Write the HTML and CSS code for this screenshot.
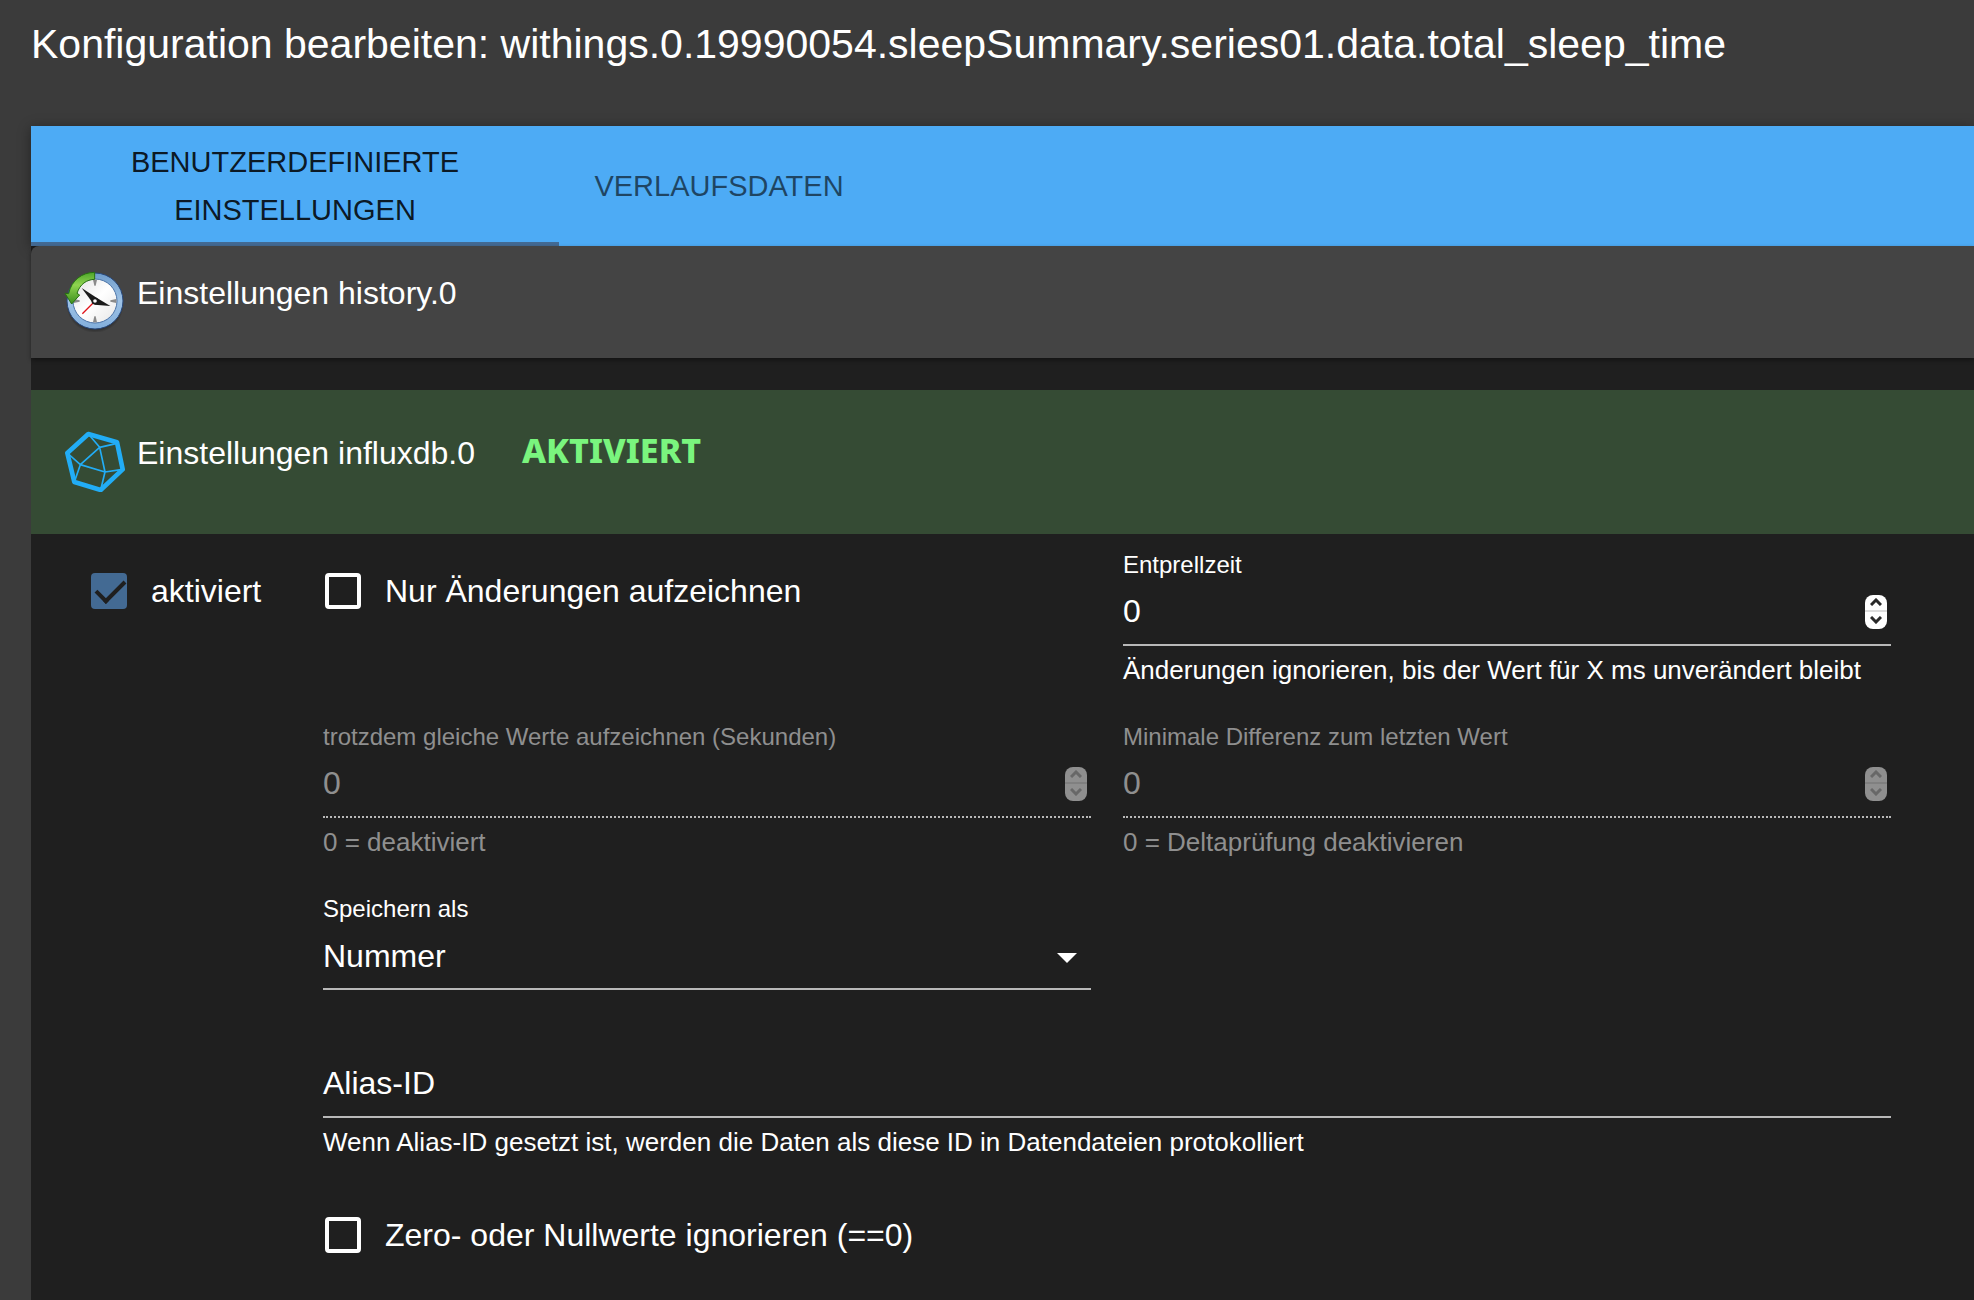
FILE: index.html
```html
<!DOCTYPE html>
<html lang="de">
<head>
  <meta charset="utf-8">
  <meta name="viewport" content="width=device-width, initial-scale=1">
  <title>Konfiguration bearbeiten</title>
  <link rel="stylesheet" href="styles.css">
</head>
<body>
  <header class="title-bar">
    <h1 class="title">Konfiguration bearbeiten: withings.0.19990054.sleepSummary.series01.data.total_sleep_time</h1>
  </header>

  <main class="content">
    <div class="tabs" role="tablist">
      <button class="tab tab-active" type="button" role="tab" aria-selected="true">Benutzerdefinierte Einstellungen</button>
      <button class="tab" type="button" role="tab" aria-selected="false">Verlaufsdaten</button>
    </div>

    <section class="panel">
      <div class="panel-head">
        <svg class="panel-icon" viewBox="36 24 192 192" aria-hidden="true">
          <defs>
            <linearGradient id="ring" x1="0" y1="0" x2="0" y2="1">
              <stop offset="0" stop-color="#6f9ccb"/>
              <stop offset="0.5" stop-color="#9fc3e6"/>
              <stop offset="1" stop-color="#82aedb"/>
            </linearGradient>
            <linearGradient id="face" x1="0" y1="0" x2="1" y2="1">
              <stop offset="0" stop-color="#e2e2e2"/>
              <stop offset="0.5" stop-color="#ffffff"/>
              <stop offset="1" stop-color="#e6e6e6"/>
            </linearGradient>
            <linearGradient id="arrow" x1="0" y1="0" x2="0" y2="1">
              <stop offset="0" stop-color="#4fa52c"/>
              <stop offset="0.4" stop-color="#8fd44f"/>
              <stop offset="1" stop-color="#3c8f1d"/>
            </linearGradient>
            <radialGradient id="shade">
              <stop offset="0.75" stop-color="#000" stop-opacity="0.6"/>
              <stop offset="1" stop-color="#000" stop-opacity="0"/>
            </radialGradient>
          </defs>
          <ellipse cx="135" cy="135" rx="86" ry="84" fill="url(#shade)"/>
          <circle cx="135" cy="123" r="84" fill="url(#ring)" stroke="#27487c" stroke-width="3"/>
          <circle cx="135" cy="123" r="66" fill="url(#face)" stroke="#4c74a8" stroke-width="3"/>
          <g fill="#8a8a8a">
            <path d="M129 59h12l-4 18h-4z"/>
            <path d="M129 187h12l-4-18h-4z"/>
            <path d="M199 117v12l-18-4v-4z"/>
            <path d="M71 117v12l18-4v-4z"/>
          </g>
          <path d="M97 161l36-36" stroke="#e0151c" stroke-width="4"/>
          <path d="M95 84l46 30-12 16z" fill="#1b1b1b"/>
          <path d="M181 138l-48-4 8-20z" fill="#1b1b1b"/>
          <circle cx="135" cy="123" r="8" fill="#fff" stroke="#1b1b1b" stroke-width="5"/>
          <path d="M134 37v21c-24 1-44 14-53 42l8 5-24 27-20-32 11 1c8-40 40-64 78-64z" fill="url(#arrow)" stroke="#267010" stroke-width="3" stroke-linejoin="round"/>
        </svg>
        <h2 class="panel-title">Einstellungen history.0</h2>
      </div>
    </section>

    <section class="panel panel-open">
      <div class="panel-head panel-head-enabled">
        <svg class="panel-icon" viewBox="36 24 192 192" fill="none" stroke="#22adf6" stroke-linejoin="round" aria-hidden="true">
          <path d="M115 42L201 67L218 148L152 210L73 186L52 99Z" stroke-width="14"/>
          <path d="M115 42L149 82L201 70M149 82L165 156L218 148M165 156L152 210M165 156L91 134L73 186M91 134L52 99M91 134L149 82" stroke-width="5"/>
        </svg>
        <h2 class="panel-title">Einstellungen influxdb.0</h2>
        <span class="status">AKTIVIERT</span>
      </div>

      <form class="settings">
        <label class="check">
          <input class="check-box" type="checkbox" checked>
          <span>aktiviert</span>
        </label>
        <label class="check">
          <input class="check-box" type="checkbox">
          <span>Nur Änderungen aufzeichnen</span>
        </label>

        <div class="field">
          <label class="field-label" for="debounce">Entprellzeit</label>
          <div class="field-line">
            <input class="field-input" id="debounce" type="number" value="0">
            <span class="stepper">
              <button class="step" type="button" aria-label="Erhöhen"><svg class="step-icon" viewBox="0 0 12 8"><path d="M1 7l5-5 5 5"/></svg></button>
              <button class="step" type="button" aria-label="Verringern"><svg class="step-icon" viewBox="0 0 12 8"><path d="M1 1l5 5 5-5"/></svg></button>
            </span>
          </div>
          <p class="field-help">Änderungen ignorieren, bis der Wert für X ms unverändert bleibt</p>
        </div>

        <div class="field field-disabled second-column">
          <label class="field-label" for="relog">trotzdem gleiche Werte aufzeichnen (Sekunden)</label>
          <div class="field-line">
            <input class="field-input" id="relog" type="number" value="0" disabled>
            <span class="stepper">
              <button class="step" type="button" aria-label="Erhöhen" disabled><svg class="step-icon" viewBox="0 0 12 8"><path d="M1 7l5-5 5 5"/></svg></button>
              <button class="step" type="button" aria-label="Verringern" disabled><svg class="step-icon" viewBox="0 0 12 8"><path d="M1 1l5 5 5-5"/></svg></button>
            </span>
          </div>
          <p class="field-help">0 = deaktiviert</p>
        </div>

        <div class="field field-disabled">
          <label class="field-label" for="delta">Minimale Differenz zum letzten Wert</label>
          <div class="field-line">
            <input class="field-input" id="delta" type="number" value="0" disabled>
            <span class="stepper">
              <button class="step" type="button" aria-label="Erhöhen" disabled><svg class="step-icon" viewBox="0 0 12 8"><path d="M1 7l5-5 5 5"/></svg></button>
              <button class="step" type="button" aria-label="Verringern" disabled><svg class="step-icon" viewBox="0 0 12 8"><path d="M1 1l5 5 5-5"/></svg></button>
            </span>
          </div>
          <p class="field-help">0 = Deltaprüfung deaktivieren</p>
        </div>

        <div class="field second-column">
          <label class="field-label" for="storage">Speichern als</label>
          <div class="field-line">
            <select class="field-input" id="storage">
              <option>Nummer</option>
            </select>
            <svg class="select-arrow" viewBox="0 0 20 14" aria-hidden="true"><path d="M0 4h20L10 14z"/></svg>
          </div>
        </div>

        <div class="field field-wide">
          <div class="field-line">
            <label class="inline-label" for="alias">Alias-ID</label>
            <input class="field-input" id="alias" type="text">
          </div>
          <p class="field-help">Wenn Alias-ID gesetzt ist, werden die Daten als diese ID in Datendateien protokolliert</p>
        </div>

        <label class="check second-column">
          <input class="check-box" type="checkbox">
          <span>Zero- oder Nullwerte ignorieren (==0)</span>
        </label>
      </form>
    </section>
  </main>
</body>
</html>
```

FILE: styles.css
```css
* {
  box-sizing: border-box;
}

body {
  display: flex;
  flex-direction: column;
  min-height: 100vh;
  margin: 0;
  background: #3b3b3b;
  color: #fff;
  font-family: "Liberation Sans", Arial, sans-serif;
  font-size: 32px;
}

button,
input,
select {
  font: inherit;
  color: inherit;
}

.title-bar {
  padding: 12px 31px 50px;
}

.title {
  margin: 0;
  font-size: 41px;
  font-weight: 400;
  line-height: 64px;
}

.content {
  display: flex;
  flex: 1;
  flex-direction: column;
  margin-left: 31px;
  background: #1f1f1f;
}

/* Tabs */

.tabs {
  display: flex;
  background: #4dabf5;
  box-shadow: 0 2px 12px rgba(0, 0, 0, 0.4);
}

.tab {
  min-width: 320px;
  max-width: 528px;
  min-height: 120px;
  padding: 12px 24px;
  border: 0;
  background: none;
  color: rgba(0, 0, 0, 0.6);
  font-size: 29px;
  line-height: 48px;
  text-transform: uppercase;
}

.tab-active {
  color: rgba(0, 0, 0, 0.87);
  box-shadow: inset 0 -4px #436a93;
}

/* Adapter panels */

.panel-head {
  display: flex;
  align-items: flex-start;
  gap: 11px;
  padding: 22px 31px 26px;
  border-top-left-radius: 8px;
  background: #444;
  box-shadow: 0 2px 4px rgba(0, 0, 0, 0.4);
}

.panel-open {
  margin-top: 32px;
}

.panel-head-enabled {
  padding: 38px 31px 42px;
  border-radius: 0;
  background: #354b34;
  box-shadow: none;
}

.panel-icon {
  width: 64px;
  height: 64px;
}

.panel-title {
  margin: 0;
  font-size: 32px;
  font-weight: 400;
  line-height: 50px;
}

.status {
  margin-left: 36px;
  color: #7af57e;
  font-family: "Noto Sans", sans-serif;
  font-size: 34px;
  font-weight: 800;
  line-height: 44px;
}

/* Settings form */

.settings {
  display: grid;
  grid-template-columns: 202px 1fr 1fr;
  align-items: start;
  gap: 39px 32px;
  padding: 17px 83px 46px 58px;
}

.second-column {
  grid-column-start: 2;
}

.check {
  display: flex;
  gap: 24px;
  margin-top: 22px;
  padding-left: 2px;
  line-height: 36px;
}

.check-box {
  appearance: none;
  flex: none;
  width: 36px;
  height: 36px;
  margin: 0;
  border: 4px solid #fff;
  border-radius: 4px;
}

.check-box:checked {
  border: 0;
  background: #436a93;
}

.check-box:checked::before {
  content: "";
  display: block;
  width: 25px;
  height: 12px;
  margin: 7px 0 0 5px;
  border: solid #1f1f1f;
  border-width: 0 0 4px 4px;
  transform: rotate(-45deg);
}

.field {
  display: flex;
  flex-direction: column;
}

.field-label,
.field-help {
  margin: 0;
  font-size: 24px;
  line-height: 28px;
}

.field-help {
  margin-top: 10px;
  font-size: 26px;
}

.field-line {
  display: flex;
  align-items: center;
  height: 67px;
  border-bottom: 2px solid #b8b8b8;
}

.field-input {
  appearance: none;
  flex: 1;
  min-width: 0;
  height: 64px;
  padding: 0;
  border: 0;
  outline: 0;
  background: none;
}

.field-input[type="number"] {
  appearance: textfield;
}

.field-disabled {
  color: #8f8f8f;
}

.field-disabled .field-line {
  border-bottom-style: dotted;
}

.stepper {
  display: flex;
  flex-direction: column;
  margin-right: 4px;
  overflow: hidden;
  border-radius: 8px;
  background: #fff;
}

.step {
  display: flex;
  align-items: center;
  justify-content: center;
  width: 22px;
  height: 17px;
  padding: 0;
  border: 0;
  background: none;
}

.step:first-child {
  border-bottom: 2px solid #ddd;
}

.step-icon {
  width: 12px;
  height: 8px;
  fill: none;
  stroke: #2a2a2a;
  stroke-width: 3px;
}

.field-disabled .stepper {
  background: #8f8f8f;
}

.field-disabled .step {
  border-color: #808080;
}

.field-disabled .step-icon {
  stroke: #686868;
}

.select-arrow {
  width: 20px;
  height: 14px;
  margin-right: 14px;
  fill: #fff;
}

.field-wide {
  grid-column: 2 / -1;
  margin-top: 22px;
}

.inline-label {
  margin-right: 16px;
}
```
